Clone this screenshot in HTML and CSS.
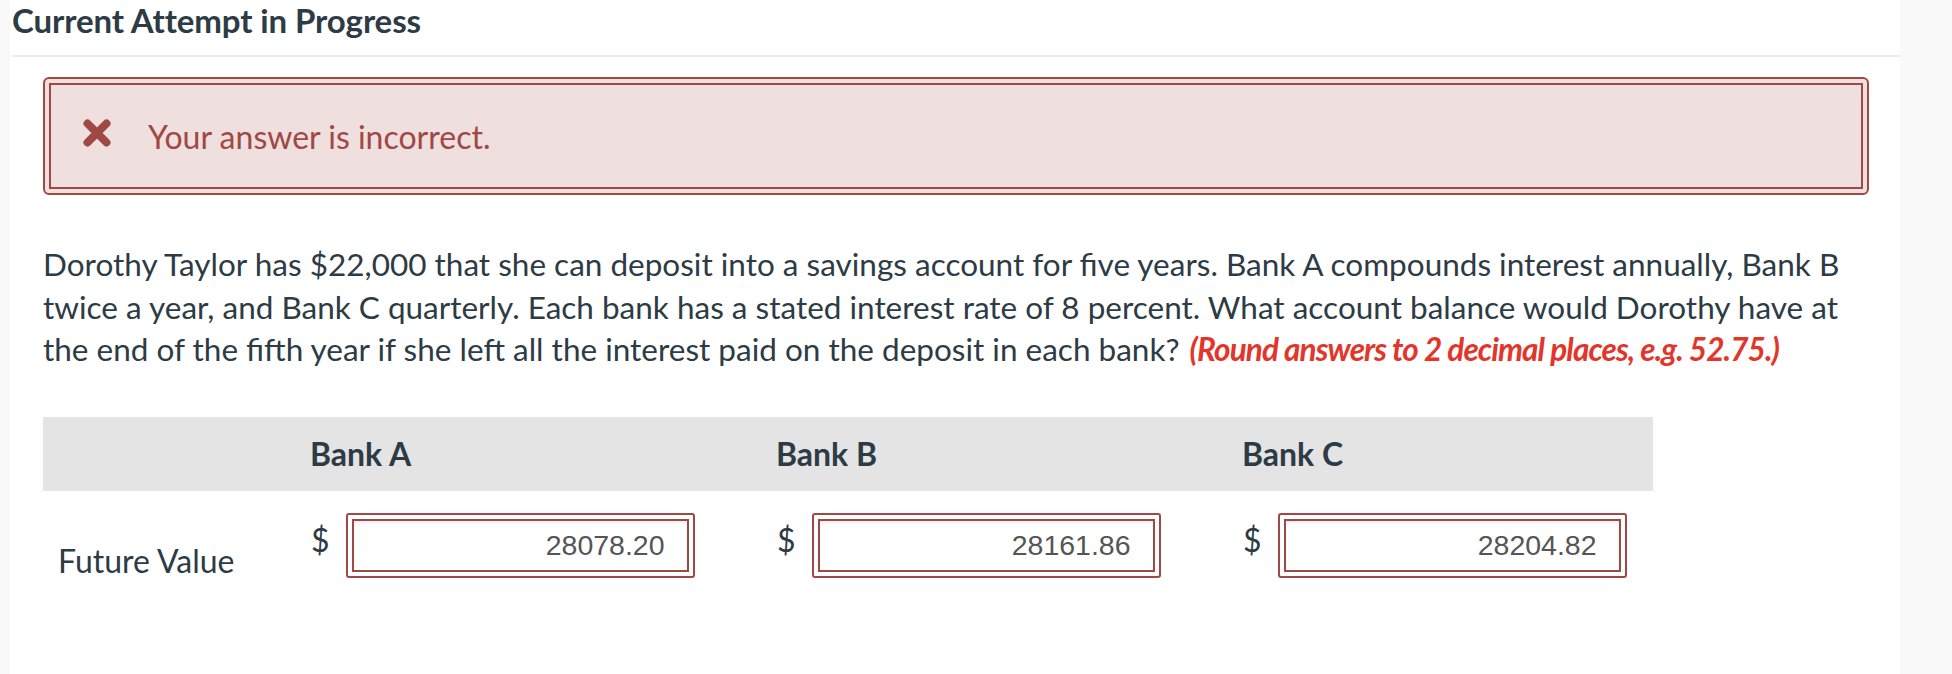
FILE: index.html
```html
<!DOCTYPE html>
<html lang="en">
<head>
<meta charset="utf-8">
<title>Current Attempt in Progress</title>
<link rel="stylesheet" href="styles.css">
</head>
<body>
<div class="page">
  <div class="gutter-left"></div>
  <main class="content">
    <header class="attempt-header">
      <h2 class="attempt-title">Current Attempt in Progress</h2>
    </header>
    <section class="question">
      <div class="alert">
        <div class="alert-inner">
          <svg class="alert-icon" width="28" height="28" viewBox="0 0 28 28" aria-hidden="true">
            <path d="M4.5 4.5 L23.5 23.5 M23.5 4.5 L4.5 23.5" stroke="#9f4844" stroke-width="8" stroke-linecap="round" fill="none"/>
          </svg>
          <span class="alert-text">Your answer is incorrect.</span>
        </div>
      </div>
      <p class="prompt">Dorothy Taylor has $22,000 that she can deposit into a savings account for five years. Bank A compounds interest annually, Bank B twice a year, and Bank C quarterly. Each bank has a stated interest rate of 8 percent. What account balance would Dorothy have at the end of the fifth year if she left all the interest paid on the deposit in each bank? <strong class="hint">(Round answers to 2 decimal places, e.g. 52.75.)</strong></p>
      <div class="answer-table">
        <div class="th"></div>
        <div class="th">Bank A</div>
        <div class="th">Bank B</div>
        <div class="th">Bank C</div>
        <div class="td label">Future Value</div>
        <div class="td cell">
          <span class="currency">$</span>
          <div class="field"><input class="field-input" type="text" value="28078.20" readonly></div>
        </div>
        <div class="td cell">
          <span class="currency">$</span>
          <div class="field"><input class="field-input" type="text" value="28161.86" readonly></div>
        </div>
        <div class="td cell">
          <span class="currency">$</span>
          <div class="field"><input class="field-input" type="text" value="28204.82" readonly></div>
        </div>
      </div>
    </section>
  </main>
  <div class="gutter-right"></div>
</div>
</body>
</html>
```

FILE: styles.css
```css
html, body {
  margin: 0;
  padding: 0;
  background: #ffffff;
}

body {
  font-family: "Lato", "Noto Sans", sans-serif;
  color: #2d3b45;
}

.page {
  display: flex;
  min-height: 674px;
}

.gutter-left {
  width: 10px;
  background: #f9f9f9;
  flex: none;
}

.gutter-right {
  width: 52px;
  background: #f9f9f9;
  flex: none;
}

.content {
  flex: 1;
  min-width: 0;
}

.attempt-header {
  height: 57px;
  border-bottom: 2px solid #ececec;
  margin-left: 2px;
  box-sizing: border-box;
}

.attempt-title {
  margin: 0;
  padding-top: 0;
  font-size: 33px;
  line-height: 40px;
  font-weight: 700;
  letter-spacing: -0.1px;
  color: #2d3b45;
}

.question {
  padding: 20px 31px 0 33px;
}

.alert {
  border: 2px solid #9f4844;
  border-radius: 6px;
  padding: 4px;
  background: #efdfdf;
}

.alert-inner {
  border: 2px solid #9f4844;
  height: 102px;
  display: flex;
  align-items: center;
  padding-left: 32px;
  gap: 37px;
}

.alert-icon {
  flex: none;
  margin-top: -6px;
}

.alert-text {
  font-size: 32px;
  color: #9f4844;
}

.prompt {
  margin: 48px 0 0 0;
  font-size: 31.5px;
  line-height: 42.5px;
  color: #2d3b45;
}

.hint {
  display: inline-block;
  margin-left: 2px;
  color: #e4352a;
  font-style: italic;
  font-weight: 700;
  letter-spacing: -0.9px;
}

.answer-table {
  margin-top: 46px;
  width: 1610px;
  display: grid;
  grid-template-columns: 252px 466px 466px 426px;
}

.th {
  background: #e4e4e4;
  height: 74px;
  display: flex;
  align-items: center;
  padding-left: 15px;
  font-size: 32px;
  font-weight: 700;
  color: #2d3b45;
}

.td {
  font-size: 32px;
  color: #2d3b45;
}

.label {
  padding: 49px 0 0 15px;
  line-height: 42px;
}

.cell {
  padding: 22px 0 0 16px;
  display: flex;
  align-items: flex-start;
  gap: 16px;
}

.currency {
  line-height: 42px;
  padding-top: 6px;
}

.field {
  border: 2px solid #9f4844;
  border-radius: 3px;
  padding: 4px;
  background: #ffffff;
}

.field-input {
  display: block;
  box-sizing: border-box;
  width: 337px;
  height: 53px;
  margin: 0;
  border: 2px solid #9f4844;
  border-radius: 0;
  padding: 0 22px 0 10px;
  text-align: right;
  font-family: "Liberation Sans", Arial, sans-serif;
  font-size: 28.5px;
  color: #555555;
  background: #ffffff;
  box-shadow: inset 0 2px 2px rgba(0, 0, 0, 0.06);
  outline: none;
}
```
